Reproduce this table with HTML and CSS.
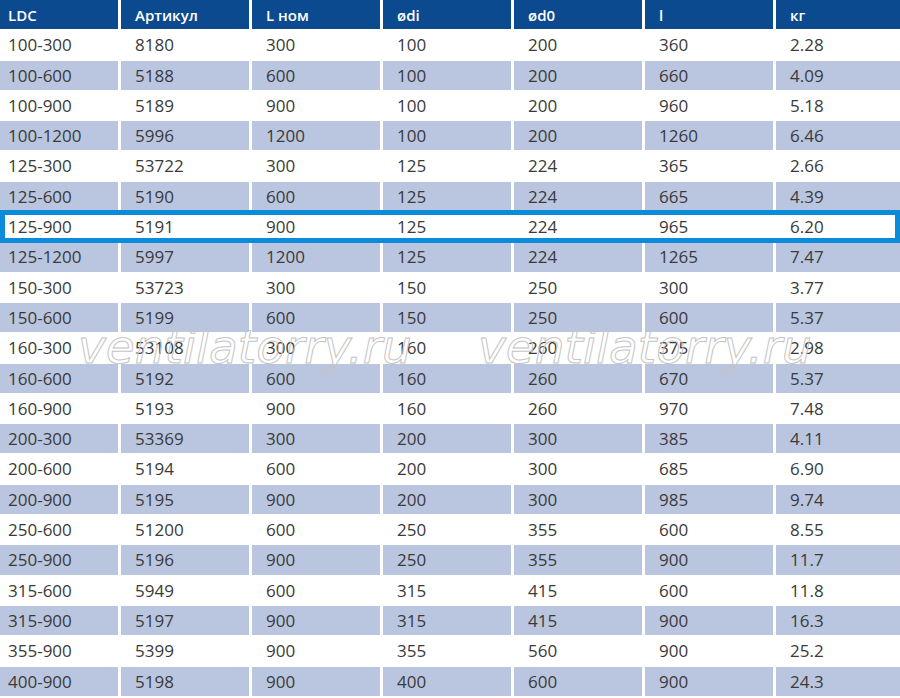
FILE: index.html
```html
<!DOCTYPE html>
<html lang="ru">
<head>
<meta charset="utf-8">
<title>LDC</title>
<link rel="stylesheet" href="styles.css">
</head>
<body>
<div class="sheet">
  <div class="table">
    <div class="row head"><div>LDC</div><div>Артикул</div><div>L ном</div><div>ødi</div><div>ød0</div><div>l</div><div>кг</div></div>
    <div class="row"><div>100-300</div><div>8180</div><div>300</div><div>100</div><div>200</div><div>360</div><div>2.28</div></div>
    <div class="row alt"><div>100-600</div><div>5188</div><div>600</div><div>100</div><div>200</div><div>660</div><div>4.09</div></div>
    <div class="row"><div>100-900</div><div>5189</div><div>900</div><div>100</div><div>200</div><div>960</div><div>5.18</div></div>
    <div class="row alt"><div>100-1200</div><div>5996</div><div>1200</div><div>100</div><div>200</div><div>1260</div><div>6.46</div></div>
    <div class="row"><div>125-300</div><div>53722</div><div>300</div><div>125</div><div>224</div><div>365</div><div>2.66</div></div>
    <div class="row alt"><div>125-600</div><div>5190</div><div>600</div><div>125</div><div>224</div><div>665</div><div>4.39</div></div>
    <div class="row selected"><div>125-900</div><div>5191</div><div>900</div><div>125</div><div>224</div><div>965</div><div>6.20</div></div>
    <div class="row alt"><div>125-1200</div><div>5997</div><div>1200</div><div>125</div><div>224</div><div>1265</div><div>7.47</div></div>
    <div class="row"><div>150-300</div><div>53723</div><div>300</div><div>150</div><div>250</div><div>300</div><div>3.77</div></div>
    <div class="row alt"><div>150-600</div><div>5199</div><div>600</div><div>150</div><div>250</div><div>600</div><div>5.37</div></div>
    <div class="row"><div>160-300</div><div>53108</div><div>300</div><div>160</div><div>260</div><div>375</div><div>2.98</div></div>
    <div class="row alt"><div>160-600</div><div>5192</div><div>600</div><div>160</div><div>260</div><div>670</div><div>5.37</div></div>
    <div class="row"><div>160-900</div><div>5193</div><div>900</div><div>160</div><div>260</div><div>970</div><div>7.48</div></div>
    <div class="row alt"><div>200-300</div><div>53369</div><div>300</div><div>200</div><div>300</div><div>385</div><div>4.11</div></div>
    <div class="row"><div>200-600</div><div>5194</div><div>600</div><div>200</div><div>300</div><div>685</div><div>6.90</div></div>
    <div class="row alt"><div>200-900</div><div>5195</div><div>900</div><div>200</div><div>300</div><div>985</div><div>9.74</div></div>
    <div class="row"><div>250-600</div><div>51200</div><div>600</div><div>250</div><div>355</div><div>600</div><div>8.55</div></div>
    <div class="row alt"><div>250-900</div><div>5196</div><div>900</div><div>250</div><div>355</div><div>900</div><div>11.7</div></div>
    <div class="row"><div>315-600</div><div>5949</div><div>600</div><div>315</div><div>415</div><div>600</div><div>11.8</div></div>
    <div class="row alt"><div>315-900</div><div>5197</div><div>900</div><div>315</div><div>415</div><div>900</div><div>16.3</div></div>
    <div class="row"><div>355-900</div><div>5399</div><div>900</div><div>355</div><div>560</div><div>900</div><div>25.2</div></div>
    <div class="row alt"><div>400-900</div><div>5198</div><div>900</div><div>400</div><div>600</div><div>900</div><div>24.3</div></div>
  </div>
  <div class="watermark wm-left">ventilatorry.ru</div>
  <div class="watermark wm-right">ventilatorry.ru</div>
</div>
</body>
</html>
```

FILE: styles.css
```css
html, body {
  margin: 0;
  padding: 0;
  background: #ffffff;
}

.sheet {
  position: relative;
  width: 900px;
  height: 698px;
  overflow: hidden;
}

.table {
  display: flex;
  flex-direction: column;
  gap: 1px;
  font-family: "Open Sans", "Noto Sans", sans-serif;
}

.row {
  display: grid;
  grid-template-columns: 118px 128px 128px 128px 128px 128px 124px;
  column-gap: 3px;
  height: 29.3px;
  font-size: 17px;
  line-height: 29.3px;
  color: #3a3a3a;
}

.row > div {
  padding-left: 14px;
  white-space: nowrap;
  background: #ffffff;
}

.row > div:first-child {
  padding-left: 8px;
}

.row.alt > div {
  background: #bac6df;
}

.row.head > div {
  background: #0b4a8e;
  color: #ffffff;
  font-size: 15px;
  font-weight: 600;
  padding-top: 1px;
  line-height: 28.3px;
}

.row.selected {
  position: relative;
}

.row.selected::after {
  content: "";
  position: absolute;
  top: -2px;
  bottom: -2px;
  left: 0;
  right: 0;
  border: 5px solid #0a8cda;
  pointer-events: none;
}

.watermark {
  position: absolute;
  top: 323px;
  font-family: "DejaVu Sans", sans-serif;
  font-style: oblique;
  font-size: 47px;
  line-height: 47px;
  color: transparent;
  -webkit-text-stroke: 1px #c4c4c4;
  white-space: nowrap;
  pointer-events: none;
}

.wm-left {
  left: 78px;
}

.wm-right {
  left: 478px;
}
```
